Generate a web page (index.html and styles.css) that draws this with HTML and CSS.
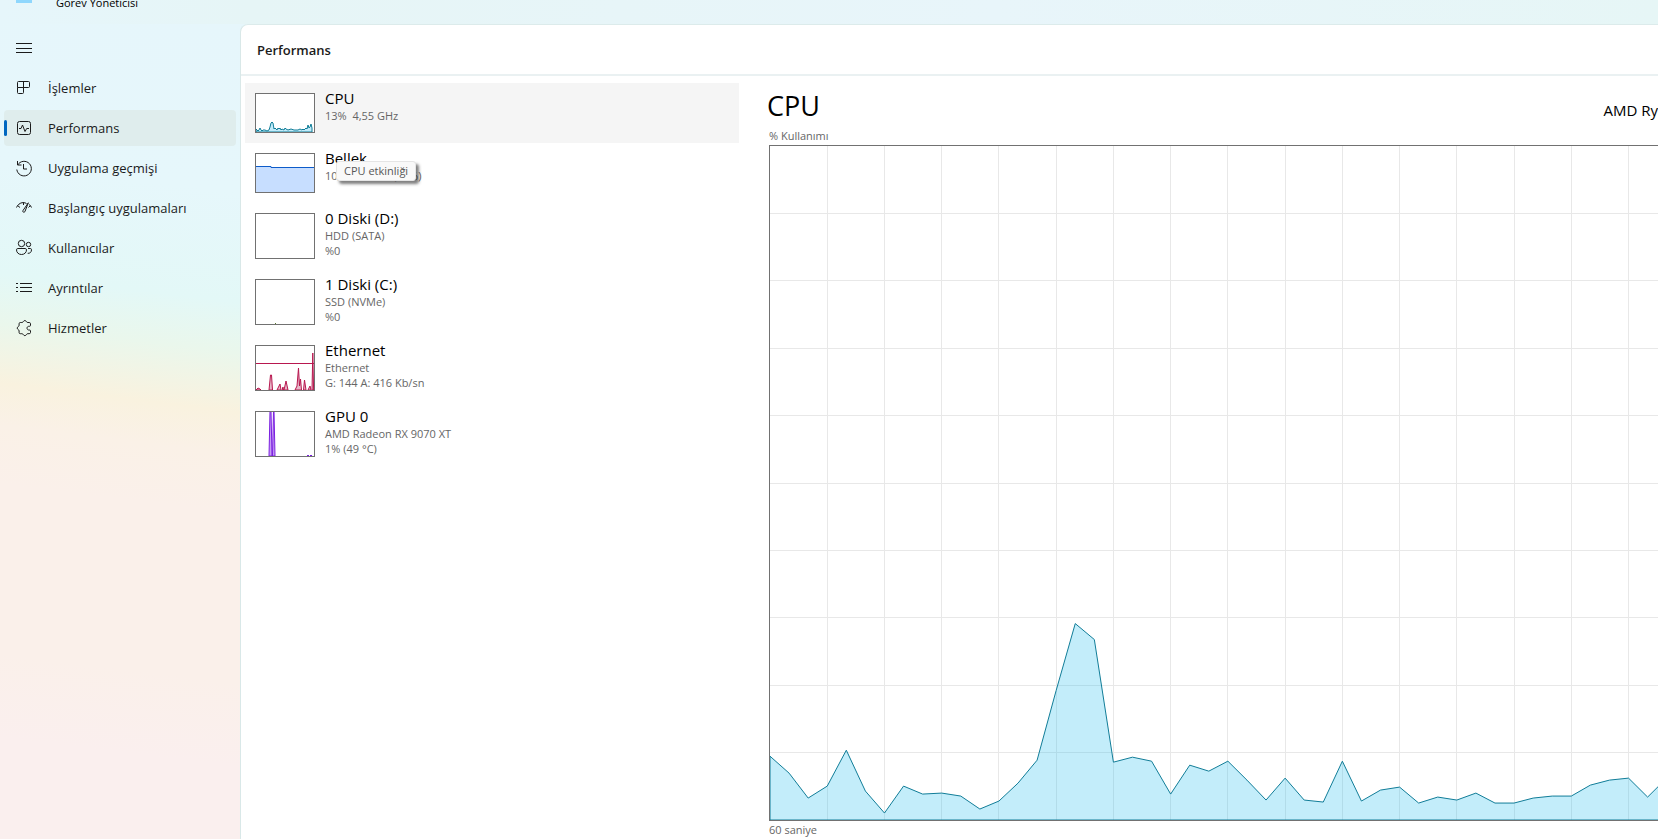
FILE: index.html
```html
<!DOCTYPE html>
<html lang="tr">

<head>
    <meta charset="UTF-8">
    <meta name="viewport" content="width=device-width, initial-scale=1.0">
    <title>Görev Yöneticisi</title>
    <link rel="stylesheet" href="styles.css">
</head>

<body>
    <header class="titlebar">
        <span class="app-icon"></span>
        <span class="app-name">Görev Yöneticisi</span>
    </header>

    <div class="window">
        <nav class="sidebar">
            <button class="menu-button" aria-label="Menü">
                <svg class="icon" viewBox="0 0 16 16"><path d="M0 3.5h16M0 8.5h16M0 12.5h16"/></svg>
            </button>
            <a class="nav-item" href="#">
                <svg class="icon" viewBox="0 0 16 16"><path d="M2.5 1.5h10a1 1 0 0 1 1 1v4a1 1 0 0 1-1 1h-11v-5a1 1 0 0 1 1-1zM1.5 7.5v5a1 1 0 0 0 1 1h4a1 1 0 0 0 1-1v-11"/></svg>
                İşlemler
            </a>
            <a class="nav-item active" href="#">
                <svg class="icon" viewBox="0 0 16 16"><rect x="1.5" y="1.5" width="13" height="13" rx="2"/><path d="M3 8.500h2l1.500-3.500 2.500 6.500 1.700-3h2.300"/></svg>
                Performans
            </a>
            <a class="nav-item" href="#">
                <svg class="icon" viewBox="0 0 16 16"><path d="M1.5 1v4h4M1.700 5A7.300 7.300 0 1 1 .8 9.500M7.500 4v5h3.500"/></svg>
                Uygulama geçmişi
            </a>
            <a class="nav-item" href="#">
                <svg class="icon" viewBox="0 0 16 16"><path d="M.5 7.500C1.500 5 4 2.600 7 2.600c1.500 0 2.500.3 3.500.9M1.500 5.500l2.500 2M13 4.500c1.300.8 2 1.800 2.500 3M14.500 5.500l-2 2M12.300 2.800L7 10.500c-.8 1.500.9 2.400 1.900 1.200zM7.500 2.600v2.400"/></svg>
                Başlangıç uygulamaları
            </a>
            <a class="nav-item" href="#">
                <svg class="icon" viewBox="0 0 16 16"><circle cx="5.5" cy="3.500" r="3.200"/><circle cx="12.500" cy="4.500" r="2.200"/><path d="M1.800 8.500h7.400c.8 0 1.300.5 1.300 1.300 0 2.700-2 4.700-5 4.700s-5-2-5-4.700c0-.8.5-1.300 1.300-1.300zM12 8.500h2.300c.8 0 1.200.5 1.200 1.200 0 2.500-1.500 3.800-3.800 3.600"/></svg>
                Kullanıcılar
            </a>
            <a class="nav-item" href="#">
                <svg class="icon" viewBox="0 0 16 16"><path d="M0 3.500h2M4 3.500h12M0 7.500h2M4 7.500h12M0 11.500h2M4 11.500h12"/></svg>
                Ayrıntılar
            </a>
            <a class="nav-item" href="#">
                <svg class="icon" viewBox="0 0 16 16"><path d="M4.300 2.500h1.500c.8 0 1.200-.3 1.500-.9.600-1.400 2.500-1.400 3.100 0 .3.600.7.900 1.400.9h1.400c.8 0 1.300.5 1.300 1.200v1.600c0 .7-.4 1-1 1h-.9c-2.100.3-2.100 3.400 0 3.700h.9c.6 0 1 .3 1 1v1.500c0 .7-.5 1.200-1.300 1.200h-1.400c-.7 0-1.100.3-1.400.9-.6 1.400-2.500 1.400-3.100 0-.3-.6-.7-.9-1.500-.9H4.300c-.8 0-1.200-.5-1.200-1.200v-1.600c0-.7-.3-1-.9-1.300-1.300-.6-1.300-2.400 0-3 .6-.3.9-.7.900-1.300V3.700c0-.7.400-1.200 1.200-1.200z"/></svg>
                Hizmetler
            </a>
        </nav>

        <main class="panel">
            <h1 class="panel-title">Performans</h1>

            <div class="content">
                <ul class="resources">
                    <li class="resource selected">
                        <svg class="thumb" viewBox="0 0 60 40">
                            <path class="cpu" d="M1 36l1 1 1 1 1-1 1-2 1 2 1 1 1-1 2 0 2 1 2-1 1-3 1-4 1-1 1 1 1 6 1-1 1 1 1 1 1-2 1 1 1-1 1 2 1-1 2 1 1-2 1 1 2 1 3-1 3 1 4 0 2-1 2 1 1-1 1 1 2-2 1 1 1-4 1 3 1-1 1-3 1 4V39H1z"/>
                        </svg>
                        <div>
                            <h2>CPU</h2>
                            <p>13%&nbsp; 4,55 GHz</p>
                        </div>
                    </li>
                    <li class="resource">
                        <svg class="thumb" viewBox="0 0 60 40">
                            <path class="memory" d="M.5 13.500h15.500v1h44V40H.5z"/>
                        </svg>
                        <div>
                            <h2>Bellek</h2>
                            <p>10,2/15,6 GB (65%)</p>
                        </div>
                        <div class="tooltip" role="tooltip">CPU etkinliği</div>
                    </li>
                    <li class="resource">
                        <svg class="thumb tall" viewBox="0 0 60 46"></svg>
                        <div>
                            <h2>0 Diski (D:)</h2>
                            <p>HDD (SATA)</p>
                            <p>%0</p>
                        </div>
                    </li>
                    <li class="resource">
                        <svg class="thumb tall" viewBox="0 0 60 46"><path class="disk" d="M20 44.500h1"/></svg>
                        <div>
                            <h2>1 Diski (C:)</h2>
                            <p>SSD (NVMe)</p>
                            <p>%0</p>
                        </div>
                    </li>
                    <li class="resource">
                        <svg class="thumb tall" viewBox="0 0 60 46">
                            <path class="net" d="M1 45l2-2 2 1 1 1zM14 45l1.500-15 1 0 1 15zM22 45l3-6 1 6zM27 45l1-3 .5 3zM29 45l2-9 2 9zM40 45l2-4 1.500-18 1 18 1-7 1 11zM48.500 45l1-10 1.500 10zM53 45l2-4 1 4zM57 45l.8-37 .8 37z"/>
                            <path class="net-line" d="M0 18.500h60"/>
                        </svg>
                        <div>
                            <h2>Ethernet</h2>
                            <p>Ethernet</p>
                            <p>G: 144 A: 416 Kb/sn</p>
                        </div>
                    </li>
                    <li class="resource">
                        <svg class="thumb tall" viewBox="0 0 60 46">
                            <path class="gpu" d="M14 45l1-45h1l1 45h.5l1-45h.5l1 45zM52 44.500h2M55 44.500h2"/>
                        </svg>
                        <div>
                            <h2>GPU 0</h2>
                            <p>AMD Radeon RX 9070 XT</p>
                            <p>1% (49 °C)</p>
                        </div>
                    </li>
                </ul>

                <section class="detail">
                    <div class="detail-head">
                        <h2>CPU</h2>
                        <span class="device">AMD Ry</span>
                    </div>
                    <div class="axis-label">% Kullanımı</div>
                    <svg class="chart" viewBox="0 0 889 676" preserveAspectRatio="none">
                        <path class="grid" id="grid"/>
                        <path class="area" id="area"/>
                    </svg>
                    <div class="axis-label">60 saniye</div>
                </section>
            </div>
        </main>
    </div>

    <script src="chart.js"></script>
</body>

</html>
```
FILE: styles.css
```css
* {
    box-sizing: border-box;
}

body {
    margin: 0;
    height: 100vh;
    overflow: hidden;
    display: flex;
    flex-direction: column;
    font-family: "Open Sans", "Noto Sans", sans-serif;
    font-size: 13px;
    color: #1b1b1b;
    background: #e6f6f8;
}

h1,
h2,
p,
ul {
    margin: 0;
    padding: 0;
    font-weight: 400;
}

/* title bar */
.titlebar {
    display: flex;
    height: 24px;
    flex: none;
    padding-left: 16px;
    background: linear-gradient(to right, #e6f6fb, #e6f5f6 15%, #e8f5fa 60%, #e6f6f6);
}

.app-icon {
    width: 16px;
    height: 3px;
    background: #8fd7fd;
}

.app-name {
    margin: -6px 0 0 24px;
    font-size: 11px;
    line-height: 18px;
    color: #000;
}

.window {
    display: flex;
    flex: 1;
    min-height: 0;
    background: linear-gradient(to bottom, #e6f6fb, #e3f8f8);
}

/* sidebar */
.sidebar {
    width: 240px;
    flex: none;
    padding: 6px 4px;
    display: flex;
    flex-direction: column;
    gap: 4px;
    background: linear-gradient(187deg, #e6f6fb 0%, #e6f7fb 20%, #e3f8f7 33%, #eaf7ec 39%, #f9f2df 46%, #faf1e7 51%, #faf0ea 58%, #faf0ea 78%, #faefee 88%);
}

.menu-button,
.nav-item {
    display: flex;
    align-items: center;
    height: 36px;
    padding: 0 12px;
    border: 0;
    border-radius: 4px;
    background: none;
    color: inherit;
    text-decoration: none;
}

.nav-item {
    position: relative;
    gap: 16px;
    white-space: nowrap;
}

.nav-item.active {
    background: #dfeded;
}

.nav-item.active::before {
    content: "";
    position: absolute;
    left: 0;
    top: 10px;
    width: 3px;
    height: 16px;
    border-radius: 2px;
    background: #0067c0;
}

.icon {
    width: 16px;
    height: 16px;
    flex: none;
    fill: none;
    stroke: #1b1b1b;
    overflow: visible;
}

/* main panel */
.panel {
    flex: 1;
    min-width: 0;
    display: flex;
    flex-direction: column;
    background: #fff;
    border-left: 1px solid #d9e8e8;
    border-top: 1px solid #dcebeb;
    border-top-left-radius: 8px;
}

.panel-title {
    height: 51px;
    flex: none;
    padding-left: 16px;
    border-bottom: 2px solid #eaf1f2;
    font-size: 13px;
    font-weight: 600;
    line-height: 50px;
}

.content {
    display: flex;
    flex: 1;
    min-height: 0;
}

/* resource list */
.resources {
    width: 498px;
    flex: none;
    padding: 7px 0 0 4px;
    list-style: none;
}

.resource {
    position: relative;
    display: flex;
    gap: 10px;
    padding: 10px;
}

.resource.selected {
    background: #f5f5f5;
}

.resource h2 {
    margin-top: -5px;
    font-size: 15px;
    line-height: 20px;
    color: #000;
}

.resource p {
    font-size: 11px;
    line-height: 15px;
    color: #666;
    white-space: nowrap;
}

.resource > div:not(.tooltip) {
    height: 40px;
}

.thumb {
    width: 60px;
    height: 40px;
    flex: none;
    outline: 1px solid #717171;
    outline-offset: -1px;
    background: #fff;
}

.thumb.tall {
    height: 46px;
}

.cpu {
    fill: #c1ebfa;
    stroke: #117d98;
}

.memory {
    fill: #c7deff;
    stroke: #0d5bc9;
}

.disk {
    stroke: #5b7a31;
}

.net {
    fill: #e7b8c8;
    stroke: #b8174f;
    stroke-linejoin: round;
}

.net-line {
    stroke: #b8174f;
}

.gpu {
    fill: #c79bf5;
    stroke: #7a1fe0;
}

.tooltip {
    position: absolute;
    left: 91px;
    top: 18px;
    height: 20px;
    padding: 0 7px;
    border: 1px solid #e5e5e5;
    border-radius: 3px;
    background: #f9f9f9;
    box-shadow: 3px 3px 3px rgba(0, 0, 0, 0.5);
    font-size: 11px;
    line-height: 18px;
    color: #575757;
    white-space: nowrap;
}

/* detail pane */
.detail {
    flex: 1;
    min-width: 0;
    padding: 10px 0 0 30px;
    display: flex;
    flex-direction: column;
}

.detail-head {
    display: flex;
    flex: none;
    justify-content: space-between;
    align-items: baseline;
    height: 41px;
    color: #000;
}

.detail-head h2 {
    margin-left: -2px;
    font-size: 27px;
    line-height: 40px;
}

.device {
    font-size: 15px;
    white-space: nowrap;
}

.axis-label {
    height: 18px;
    flex: none;
    font-size: 11px;
    line-height: 18px;
    color: #666;
}

.chart {
    flex: 1;
    min-height: 0;
    width: 100%;
    border: 1px solid #717171;
    border-right: 0;
}

.chart path {
    vector-effect: non-scaling-stroke;
}

.grid {
    fill: none;
    stroke: #e8e8e8;
    shape-rendering: crispEdges;
}

.area {
    fill: rgba(17, 182, 234, 0.25);
    stroke: #117d98;
}
```
FILE: chart.js
```js
// CPU usage, one sample per second, measured down from the top of the plot
const samples = [
    612, 629, 654, 642, 606, 647, 669, 642, 650, 649, 652, 665,
    657, 639, 616, 546, 479, 495, 618, 613, 617, 650, 621, 627,
    617, 636, 656, 634, 656, 658, 617, 657, 646, 643, 659, 653,
    656, 649, 659, 659, 654, 652, 652, 641, 636, 634, 653, 634
];
const HEIGHT = 676;
const STEP = 19.1;

let grid = '';
for (let i = 1; i < 10; i++) {
    grid += `M0 ${i * HEIGHT / 10}H900`;
}
for (let i = 3; i < samples.length; i += 3) {
    grid += `M${i * STEP} 0V${HEIGHT}`;
}
document.getElementById('grid').setAttribute('d', grid);

const points = samples.map((y, i) => `${i * STEP} ${y}`);
document.getElementById('area').setAttribute('d', `M0 ${HEIGHT}L${points.join('L')}V${HEIGHT}Z`);
```
